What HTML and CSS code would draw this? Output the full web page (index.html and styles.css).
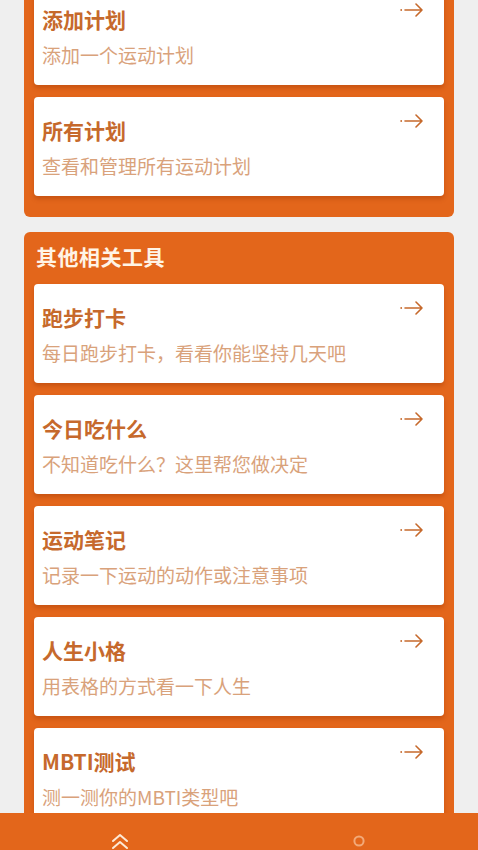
FILE: index.html
```html
<!DOCTYPE html>
<html lang="zh">
<head>
<meta charset="utf-8">
<title>工具</title>
<link rel="stylesheet" href="styles.css">
</head>
<body>
<div class="page">
  <section class="panel panel-scrolled">
    <div class="cards">
      <div class="card">
        <div class="text">
          <div class="title">添加计划</div>
          <div class="sub">添加一个运动计划</div>
        </div>
        <svg class="arrow" viewBox="0 0 23 14"><circle cx="1.2" cy="7" r="0.9"/><path d="M5 7H22M16 1L22 7L16 13"/></svg>
      </div>
      <div class="card">
        <div class="text">
          <div class="title">所有计划</div>
          <div class="sub">查看和管理所有运动计划</div>
        </div>
        <svg class="arrow" viewBox="0 0 23 14"><circle cx="1.2" cy="7" r="0.9"/><path d="M5 7H22M16 1L22 7L16 13"/></svg>
      </div>
    </div>
  </section>
  <section class="panel">
    <div class="panel-head">其他相关工具</div>
    <div class="cards">
      <div class="card">
        <div class="text">
          <div class="title">跑步打卡</div>
          <div class="sub">每日跑步打卡，看看你能坚持几天吧</div>
        </div>
        <svg class="arrow" viewBox="0 0 23 14"><circle cx="1.2" cy="7" r="0.9"/><path d="M5 7H22M16 1L22 7L16 13"/></svg>
      </div>
      <div class="card">
        <div class="text">
          <div class="title">今日吃什么</div>
          <div class="sub">不知道吃什么？这里帮您做决定</div>
        </div>
        <svg class="arrow" viewBox="0 0 23 14"><circle cx="1.2" cy="7" r="0.9"/><path d="M5 7H22M16 1L22 7L16 13"/></svg>
      </div>
      <div class="card">
        <div class="text">
          <div class="title">运动笔记</div>
          <div class="sub">记录一下运动的动作或注意事项</div>
        </div>
        <svg class="arrow" viewBox="0 0 23 14"><circle cx="1.2" cy="7" r="0.9"/><path d="M5 7H22M16 1L22 7L16 13"/></svg>
      </div>
      <div class="card">
        <div class="text">
          <div class="title">人生小格</div>
          <div class="sub">用表格的方式看一下人生</div>
        </div>
        <svg class="arrow" viewBox="0 0 23 14"><circle cx="1.2" cy="7" r="0.9"/><path d="M5 7H22M16 1L22 7L16 13"/></svg>
      </div>
      <div class="card">
        <div class="text">
          <div class="title">MBTI测试</div>
          <div class="sub">测一测你的MBTI类型吧</div>
        </div>
        <svg class="arrow" viewBox="0 0 23 14"><circle cx="1.2" cy="7" r="0.9"/><path d="M5 7H22M16 1L22 7L16 13"/></svg>
      </div>
    </div>
  </section>
</div>
<nav class="tabbar">
  <div class="tab">
    <svg class="tab-home" viewBox="0 0 20 18"><path d="M3 8L10 2L17 8M3 15L10 9L17 15"/></svg>
  </div>
  <div class="tab">
    <svg class="tab-me" viewBox="0 0 12 12"><circle cx="6" cy="6" r="4.6"/></svg>
  </div>
</nav>
</body>
</html>
```
FILE: styles.css
```css
html, body {
  margin: 0;
  padding: 0;
  height: 100%;
  overflow: hidden;
}
body {
  background: #efefef;
  font-family: "Noto Sans CJK SC", "Noto Sans", sans-serif;
}
.page {
  margin-top: -66px;
  padding: 0 24px;
  display: flex;
  flex-direction: column;
  gap: 15px;
}
.panel {
  background: #e3661b;
  border-radius: 6px;
  padding: 0 10px 21px;
}
.panel-scrolled {
  padding-top: 52px;
}
.panel-head {
  height: 52px;
  line-height: 48px;
  padding-left: 2px;
  color: #fff4e6;
  font-size: 21px;
  font-weight: 700;
  letter-spacing: 0.5px;
}
.cards {
  display: flex;
  flex-direction: column;
  gap: 12px;
}
.card {
  height: 99px;
  box-sizing: border-box;
  background: #fff;
  border-radius: 4px;
  box-shadow: 0 3px 4px rgba(150, 50, 0, 0.35);
  padding: 0 21px 0 8px;
  display: flex;
  justify-content: space-between;
  align-items: flex-start;
}
.text {
  padding-top: 19px;
}
.title {
  font-size: 21px;
  line-height: 28px;
  font-weight: 700;
  color: #c6692c;
}
.sub {
  margin-top: 9px;
  font-size: 19px;
  line-height: 26px;
  color: #d9a27b;
}
.arrow {
  width: 23px;
  height: 14px;
  margin-top: 17px;
  fill: #c6692c;
  stroke: #c6692c;
  stroke-width: 1.6;
  stroke-linecap: round;
  stroke-linejoin: round;
}
.arrow circle {
  stroke: none;
}
.arrow path {
  fill: none;
}
.tabbar {
  position: fixed;
  left: 0;
  right: 0;
  bottom: 0;
  height: 37px;
  background: #e3661b;
  display: flex;
}
.tab {
  flex: 1;
  display: flex;
  justify-content: center;
  align-items: flex-start;
}
.tab-home {
  width: 20px;
  height: 18px;
  margin-top: 20px;
  fill: none;
  stroke: #fde9d6;
  stroke-width: 2;
  stroke-linecap: round;
  stroke-linejoin: round;
}
.tab-me {
  width: 12px;
  height: 12px;
  margin-top: 22px;
  fill: none;
  stroke: #f2a978;
  stroke-width: 2;
}
```
